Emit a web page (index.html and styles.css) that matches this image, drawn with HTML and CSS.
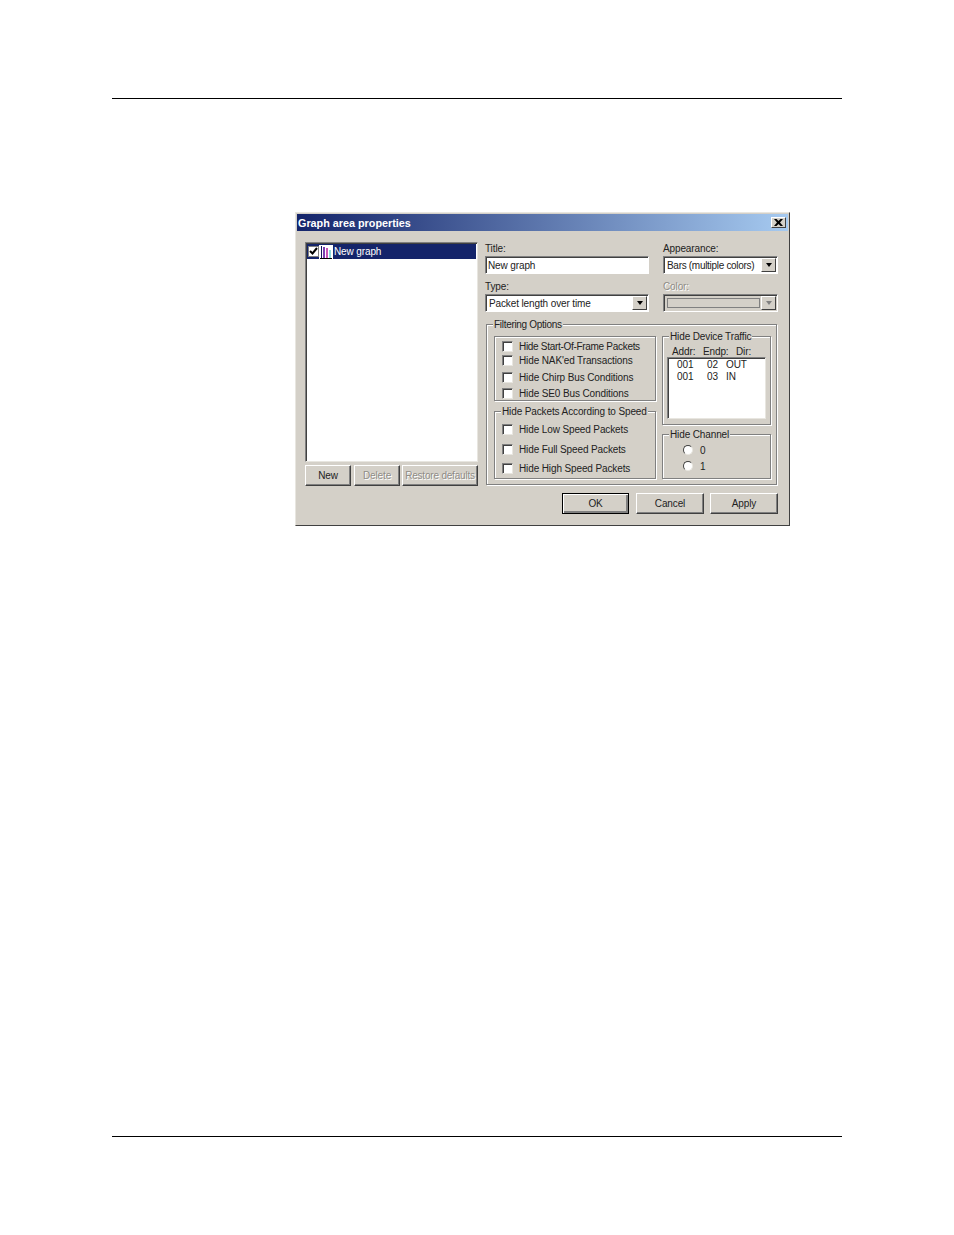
FILE: index.html
```html
<!DOCTYPE html>
<html lang="en">
<head>
    <meta charset="UTF-8">
    <title>Graph area properties</title>
    <link rel="stylesheet" href="styles.css">
</head>
<body>
    <div class="page">
        <div class="rule"></div>

        <div class="dialog">
            <div class="titlebar">
                <span>Graph area properties</span>
                <span class="close">
                    <svg width="9" height="7" viewBox="0 0 9 7"><path d="M0 0h2.500l2 2 2-2H9L6 3.500 9 7H6.500l-2-2-2 2H0l3-3.500z" fill="#000"/></svg>
                </span>
            </div>

            <div class="content">
                <div class="left">
                    <div class="listbox">
                        <div class="list-item">
                            <span class="tick">
                                <svg width="9" height="9" viewBox="0 0 9 9"><path d="M1 4l2.500 2.500L8 1" fill="none" stroke="#000" stroke-width="2"/></svg>
                            </span>
                            <svg class="chart-icon" width="14" height="14" viewBox="0 0 14 14">
                                <rect width="14" height="14" fill="#fff"/>
                                <rect x="2" y="1" width="1" height="12" fill="#14145a"/>
                                <rect x="1" y="13" width="12" height="1" fill="#000"/>
                                <rect x="4" y="2" width="2" height="11" fill="#7a3fb0"/>
                                <rect x="7" y="3" width="2" height="10" fill="#c855b5"/>
                                <rect x="10" y="5" width="2" height="8" fill="#8fdce0"/>
                            </svg>
                            <span class="list-label">New graph</span>
                        </div>
                    </div>
                    <div class="left-buttons">
                        <button class="btn btn-new">New</button>
                        <button class="btn btn-delete" disabled>Delete</button>
                        <button class="btn btn-restore" disabled>Restore defaults</button>
                    </div>
                </div>

                <div class="right">
                    <div class="fields">
                        <div class="field">
                            <label>Title:</label>
                            <div class="input">New graph</div>
                        </div>
                        <div class="field">
                            <label>Appearance:</label>
                            <div class="combo">
                                <span class="combo-text narrow">Bars (multiple colors)</span>
                                <span class="arrow"><i></i></span>
                            </div>
                        </div>
                        <div class="field">
                            <label>Type:</label>
                            <div class="combo">
                                <span class="combo-text">Packet length over time</span>
                                <span class="arrow"><i></i></span>
                            </div>
                        </div>
                        <div class="field disabled">
                            <label>Color:</label>
                            <div class="combo">
                                <span class="combo-swatch"></span>
                                <span class="arrow"><i></i></span>
                            </div>
                        </div>
                    </div>

                    <div class="group filtering">
                        <span class="legend narrow">Filtering Options</span>
                        <div class="filter-grid">
                            <div class="filter-col">
                                <div class="group frames">
                                    <div class="check"><span class="box"></span><span class="narrow">Hide Start-Of-Frame Packets</span></div>
                                    <div class="check"><span class="box"></span>Hide NAK'ed Transactions</div>
                                    <div class="check"><span class="box"></span>Hide Chirp Bus Conditions</div>
                                    <div class="check"><span class="box"></span>Hide SE0 Bus Conditions</div>
                                </div>
                                <div class="group speeds">
                                    <span class="legend">Hide Packets According to Speed</span>
                                    <div class="check"><span class="box"></span>Hide Low Speed Packets</div>
                                    <div class="check"><span class="box"></span>Hide Full Speed Packets</div>
                                    <div class="check"><span class="box"></span>Hide High Speed Packets</div>
                                </div>
                            </div>
                            <div class="filter-col">
                                <div class="group traffic">
                                    <span class="legend">Hide Device Traffic</span>
                                    <div class="traffic-head"><span>Addr:</span><span>Endp:</span><span>Dir:</span></div>
                                    <div class="traffic-list">
                                        <div class="traffic-row"><span>001</span><span>02</span><span>OUT</span></div>
                                        <div class="traffic-row"><span>001</span><span>03</span><span>IN</span></div>
                                    </div>
                                </div>
                                <div class="group channel">
                                    <span class="legend">Hide Channel</span>
                                    <div class="radio"><span class="dot"></span>0</div>
                                    <div class="radio"><span class="dot"></span>1</div>
                                </div>
                            </div>
                        </div>
                    </div>
                </div>
            </div>

            <div class="footer-buttons">
                <button class="btn btn-main default">OK</button>
                <button class="btn btn-main">Cancel</button>
                <button class="btn btn-main">Apply</button>
            </div>
        </div>

        <div class="rule rule-bottom"></div>
    </div>
</body>
</html>
```

FILE: styles.css
```css
* {
    box-sizing: border-box;
}

body {
    margin: 0;
    background: #fff;
    font-family: "Liberation Sans", Arial, sans-serif;
    font-size: 10px;
    letter-spacing: -0.12px;
    color: #222;
}

.page {
    height: 1235px;
    padding: 98px 112px 0;
}

.rule {
    height: 1px;
    background: #000;
}

.rule-bottom {
    margin-top: 610px;
}

.narrow {
    letter-spacing: -0.3px;
}

/* dialog window */
.dialog {
    width: 495px;
    height: 314px;
    margin: 113px 0 0 183px;
    background: #d4d0c8;
    border: 1px solid;
    border-color: #e8e6e0 #404040 #404040 #e8e6e0;
    padding: 1px;
}

.titlebar {
    height: 17px;
    margin-bottom: 11px;
    padding: 0 2px 0 1px;
    display: flex;
    align-items: center;
    justify-content: space-between;
    background: linear-gradient(90deg, #14246a, #a6caf0);
    color: #fff;
    font-weight: bold;
    font-size: 10.800px;
    letter-spacing: 0;
}

.close {
    width: 15px;
    height: 11px;
    display: flex;
    align-items: center;
    justify-content: center;
    background: #d4d0c8;
    border: 1px solid;
    border-color: #fff #404040 #404040 #fff;
}

.content {
    display: flex;
    gap: 7px;
    padding-left: 8px;
}

.left {
    width: 173px;
}

.listbox {
    height: 220px;
    background: #fff;
    border: 1px solid;
    border-color: #808080 #e8e6e0 #e8e6e0 #808080;
    box-shadow: inset 1px 1px 0 #404040;
    padding: 1px;
}

.list-item {
    height: 15px;
    display: flex;
    align-items: center;
    background: #14246a;
    color: #fff;
    padding-left: 1px;
}

.tick {
    width: 11px;
    height: 11px;
    display: flex;
    align-items: center;
    justify-content: center;
    background: #fff;
    border: 1px solid #808080;
}

.chart-icon {
    flex: none;
}

.list-label {
    margin-left: 1px;
}

.left-buttons {
    display: flex;
    gap: 2px;
    margin-top: 3px;
}

.btn {
    height: 21px;
    padding: 0;
    background: #d4d0c8;
    border: 1px solid;
    border-color: #fff #404040 #404040 #fff;
    box-shadow: inset -1px -1px 0 #808080;
    font: 10px "Liberation Sans", Arial, sans-serif;
    letter-spacing: inherit;
    color: #222;
}

.btn:disabled {
    color: #8f8c86;
    text-shadow: 1px 1px 0 #fff;
}

.btn-new {
    width: 46px;
    margin-right: 1px;
}

.btn-delete {
    width: 46px;
}

.btn-restore {
    width: 76px;
    letter-spacing: -0.2px;
}

.btn-main {
    width: 68px;
}

.default {
    width: 67px;
    margin-right: 1px;
    border: 1px solid #000;
    box-shadow: inset 1px 1px 0 #fff, inset -2px -2px 0 #808080;
}

.footer-buttons {
    display: flex;
    justify-content: flex-end;
    gap: 6px;
    margin-top: 7px;
    padding-right: 10px;
}

/* right column */
.right {
    width: 292px;
}

.fields {
    display: grid;
    grid-template-columns: 164px 115px;
    column-gap: 14px;
    row-gap: 6px;
    margin-bottom: 12px;
}

.field label {
    display: block;
    height: 14px;
    padding-top: 1px;
    line-height: 12px;
}

.disabled label {
    color: #8f8c86;
    text-shadow: 1px 1px 0 #fff;
}

.input,
.combo {
    height: 18px;
    background: #fff;
    border: 1px solid;
    border-color: #808080 #fff #fff #808080;
    box-shadow: inset 1px 1px 0 #404040;
    display: flex;
    align-items: center;
    padding-left: 2px;
}

.combo {
    justify-content: space-between;
    padding: 0 0 0 3px;
}

.arrow {
    width: 15px;
    height: 14px;
    margin-right: 1px;
    display: flex;
    align-items: center;
    justify-content: center;
    background: #d4d0c8;
    border: 1px solid;
    border-color: #fff #404040 #404040 #fff;
}

.arrow i {
    width: 0;
    height: 0;
    border-left: 3.500px solid transparent;
    border-right: 3.500px solid transparent;
    border-top: 4px solid #000;
}

.disabled .combo {
    background: #d4d0c8;
}

.disabled .arrow i {
    border-top-color: #808080;
}

.combo-swatch {
    flex: 1;
    height: 10px;
    margin-right: 1px;
    border: 1px solid #808080;
}

/* group boxes */
.group {
    position: relative;
    border: 1px solid #808080;
    box-shadow: 1px 1px 0 #fff, inset 1px 1px 0 #fff;
}

.legend {
    position: absolute;
    top: -6px;
    left: 6px;
    padding: 0 1px;
    line-height: 12px;
    background: #d4d0c8;
}

.filtering {
    width: 291px;
    height: 161px;
    margin-left: 1px;
    padding: 11px 5px 0 7px;
}

.filter-grid {
    display: flex;
    gap: 6px;
}

.filter-col {
    width: 162px;
}

.filter-col + .filter-col {
    width: 109px;
}

.frames {
    height: 65px;
    padding: 2px 7px 0;
}

.speeds {
    height: 68px;
    margin-top: 10px;
    padding: 10px 7px 0;
}

.check {
    height: 14px;
    display: flex;
    align-items: center;
    gap: 6px;
    white-space: nowrap;
}

.frames .check:nth-child(3) {
    margin-top: 3px;
}

.frames .check:nth-child(4) {
    margin-top: 2px;
}

.speeds .check:nth-of-type(2) {
    margin-top: 6px;
}

.speeds .check:nth-of-type(3) {
    margin-top: 5px;
}

.box {
    flex: none;
    width: 11px;
    height: 11px;
    background: #fff;
    border: 1px solid;
    border-color: #808080 #e8e6e0 #e8e6e0 #808080;
    box-shadow: inset 1px 1px 0 #404040;
}

.traffic {
    height: 89px;
    padding: 9px 4px 0;
}

.traffic-head {
    display: flex;
    height: 11px;
    line-height: 11px;
    padding-left: 5px;
}

.traffic-head span:nth-child(1) {
    width: 31px;
}

.traffic-head span:nth-child(2) {
    width: 33px;
}

.traffic-list {
    height: 62px;
    background: #fff;
    border: 1px solid;
    border-color: #808080 #e8e6e0 #e8e6e0 #808080;
    box-shadow: inset 1px 1px 0 #404040;
    padding: 1px 0 0 9px;
}

.traffic-row {
    display: flex;
    height: 12px;
    line-height: 12px;
}

.traffic-row span:nth-child(1) {
    width: 30px;
}

.traffic-row span:nth-child(2) {
    width: 19px;
}

.channel {
    height: 45px;
    margin-top: 9px;
    padding: 7px 0 0 20px;
}

.radio {
    height: 16px;
    display: flex;
    align-items: center;
    gap: 7px;
}

.dot {
    width: 10px;
    height: 10px;
    border-radius: 50%;
    background: #fff;
    border: 1px solid;
    border-color: #404040 #e8e6e0 #e8e6e0 #404040;
}
```
